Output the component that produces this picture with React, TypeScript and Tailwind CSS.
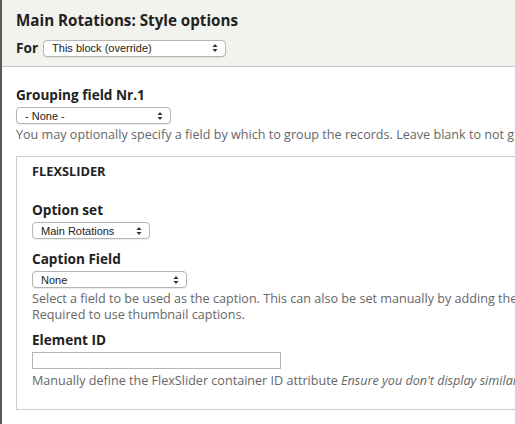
import React from "react";

function Sel({ label, w }: { label: string; w: string }) {
  return (
    <div
      className={`${w} h-[17px] flex items-center justify-between rounded-[4px] border border-[#b5b5b5] bg-white pl-[8px] pr-[7px] text-[11px] text-[#222] shadow-[0_1px_1px_rgba(0,0,0,0.08)]`}
      style={{ fontFamily: '"Liberation Sans", Arial, sans-serif' }}
    >
      <span>{label}</span>
      <svg width="6" height="10" viewBox="0 0 6 10">
        <path d="M3 1 L5.5 4 L0.5 4 Z" fill="#333" />
        <path d="M3 9 L5.5 6 L0.5 6 Z" fill="#333" />
      </svg>
    </div>
  );
}

export default function App() {
  return (
    <div
      className="w-[515px] h-[424px] overflow-hidden bg-white border-l-2 border-[#5a5a5a] text-[#333]"
      style={{ fontFamily: '"Open Sans", "DejaVu Sans", sans-serif' }}
    >
      <div className="w-[700px]">
        <div className="bg-[#f2f2ef] border-b border-[#c8c8c8] px-[14px] pt-[9px] pb-[8px]">
          <div className="text-[15.2px] font-bold leading-[22px] text-[#222]">Main Rotations: Style options</div>
          <div className="mt-[7px] flex items-center gap-[5px]">
            <span className="text-[13.6px] font-bold text-[#222]">For</span>
            <Sel label="This block (override)" w="w-[183px]" />
          </div>
        </div>
        <div className="px-[14px] pt-[19px]">
          <div className="text-[13.6px] font-bold leading-[18px] text-[#222]">Grouping field Nr.1</div>
          <div className="mt-[3px]"><Sel label="- None -" w="w-[155px]" /></div>
          <div className="mt-[2px] text-[12.6px] leading-[17px] text-[#666] whitespace-nowrap">
            You may optionally specify a field by which to group the records. Leave blank to not group.
          </div>
          <div className="mt-[13px] border border-[#ccc] w-[650px] px-[15px] pt-[6px] pb-[20px]">
            <div className="text-[12.8px] font-bold leading-[17px] text-[#222]">FLEXSLIDER</div>
            <div className="mt-[21px] text-[13.6px] font-bold leading-[18px] text-[#222]">Option set</div>
            <div className="mt-[3px]"><Sel label="Main Rotations" w="w-[118px]" /></div>
            <div className="mt-[11px] text-[13.6px] font-bold leading-[18px] text-[#222]">Caption Field</div>
            <div className="mt-[3px]"><Sel label="None" w="w-[155px]" /></div>
            <div className="mt-[3px] text-[12.6px] leading-[16px] text-[#666] whitespace-nowrap">
              Select a field to be used as the caption. This can also be set manually by adding the caption text.
              <br />
              Required to use thumbnail captions.
            </div>
            <div className="mt-[8px] text-[13.6px] font-bold leading-[18px] text-[#222]">Element ID</div>
            <div className="mt-[3px] w-[249px] h-[17px] border border-[#b5b5b5] bg-white" />
            <div className="mt-[3px] text-[12.6px] leading-[17px] text-[#666] whitespace-nowrap">
              Manually define the FlexSlider container ID attribute <em>Ensure you don't display similar ID elements.</em>
            </div>
          </div>
        </div>
      </div>
    </div>
  );
}
